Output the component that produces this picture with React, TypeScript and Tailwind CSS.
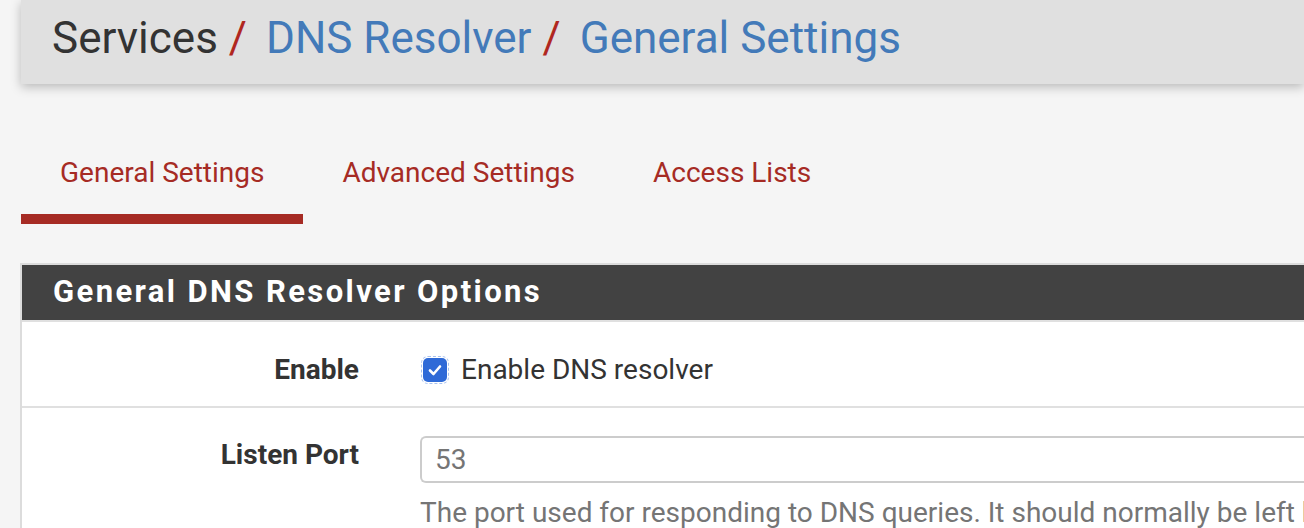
import React from 'react';

const tabs = ['General Settings', 'Advanced Settings', 'Access Lists'];

export default function App() {
  return (
    <div className="w-[1304px] h-[528px] overflow-hidden bg-[#f5f5f5] font-['Roboto',sans-serif]">
      {/* breadcrumb bar */}
      <div className="pl-[21px]">
        <div className="h-[84px] bg-[#e0e0e0] shadow-[0_3px_10px_rgba(0,0,0,0.25)] flex items-center pl-[31px] pb-[8px]">
          <h1 className="text-[44px] leading-none text-[#333] flex items-baseline whitespace-nowrap">
            <span>Services</span>
            <span className="text-[#b0271f] ml-[11px] mr-[19px]">/</span>
            <span className="text-[#437ab9]">DNS Resolver</span>
            <span className="text-[#b0271f] ml-[11px] mr-[19px]">/</span>
            <span className="text-[#437ab9]">General Settings</span>
          </h1>
        </div>
      </div>

      {/* tabs */}
      <div className="pl-[21px] mt-[72px] flex">
        {tabs.map((t, i) => (
          <div
            key={t}
            className={`px-[39px] pb-[24px] text-[28px] leading-[34px] text-[#a62b24] whitespace-nowrap border-b-[10px] ${
              i === 0 ? 'border-[#a62b24]' : 'border-transparent'
            }`}
          >
            {t}
          </div>
        ))}
      </div>

      {/* panel */}
      <div className="ml-[20px] mt-[39px] border-2 border-r-0 border-[#dcdcdc] bg-white">
        <div className="h-[55px] bg-[#424242] flex items-center pl-[31px] pb-[3px]">
          <h2 className="text-[31px] font-bold text-white tracking-[2.4px] leading-none whitespace-nowrap">
            General DNS Resolver Options
          </h2>
        </div>

        <div className="flex items-center h-[86px] pt-[11px] border-t-2 border-[#e0e0e0]">
          <div className="w-[337px] text-right text-[28px] font-bold text-[#333]">Enable</div>
          <div className="ml-[64px] flex items-center">
            <span className="w-[24px] h-[24px] rounded-[5px] bg-[#2f6ad7] flex items-center justify-center outline-1 outline-dashed outline-offset-1 outline-[#a9c2ef]">
              <svg width="16" height="16" viewBox="0 0 16 16">
                <path d="M3 8.5 L6.5 12 L13 4.5" fill="none" stroke="#fff" strokeWidth="2.6" strokeLinecap="round" strokeLinejoin="round" />
              </svg>
            </span>
            <span className="ml-[14px] text-[28px] text-[#333]">Enable DNS resolver</span>
          </div>
        </div>

        <div className="flex border-t-2 border-[#e0e0e0] pt-[28px]">
          <div className="w-[337px] text-right text-[28px] leading-[34px] font-bold text-[#333] pt-[2px]">Listen Port</div>
          <div className="ml-[61px] flex-1 min-w-0">
            <div className="h-[47px] border-2 border-[#cccccc] border-r-0 rounded-l-[6px] flex items-center pl-[13px] text-[28px] text-[#757575]">
              53
            </div>
            <p className="mt-[13px] text-[28px] leading-[34px] text-[#757575] whitespace-nowrap">
              The port used for responding to DNS queries. It should normally be left blank unless another service needs to bind to TCP/UDP port 53.
            </p>
          </div>
        </div>
      </div>
    </div>
  );
}
